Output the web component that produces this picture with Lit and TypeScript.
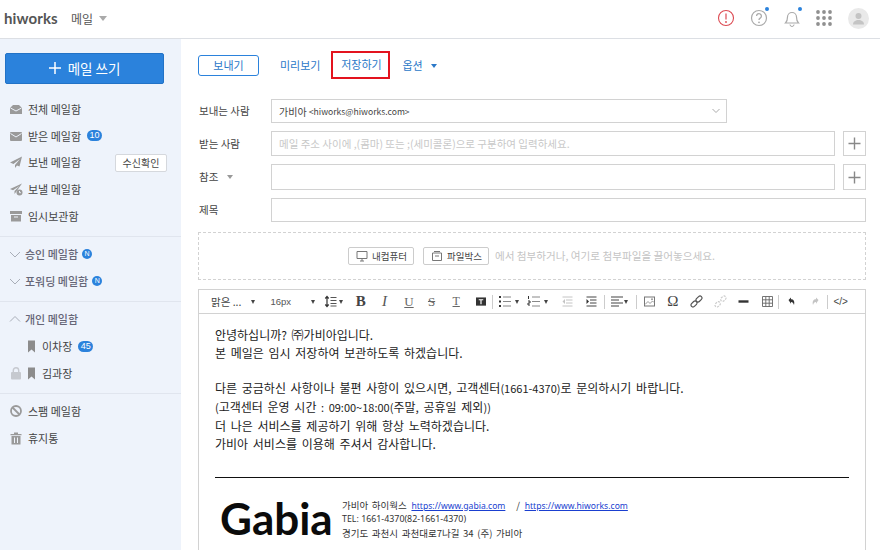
import { LitElement, html, css, svg } from "lit";
import { customElement } from "lit/decorators.js";

const ic = (body: unknown, w = 14, h = 14, vb = "0 0 14 14") =>
  html`<svg class="ic" width=${w} height=${h} viewBox=${vb}>${body}</svg>`;

const G = "#9a9a9a";
const icons = {
  all: ic(svg`<path d="M1 6l3-3h6l3 3v6H1z" fill="${G}"/><path d="M1.500 6L7 9l5.500-3" fill="none" stroke="#eef3fb" stroke-width="1"/>`),
  inbox: ic(svg`<rect x="1" y="3" width="12" height="9" rx="1" fill="${G}"/><path d="M1.500 4.500L7 8l5.500-3.500" fill="none" stroke="#eef3fb"/>`),
  sent: ic(svg`<path d="M13 1.500L1 7.500l3.500 1.500L11 4 6 10v3l2-2.500 2.500 1z" fill="${G}"/>`),
  sched: ic(svg`<path d="M13 1.500L1 7l3 1.300L10.500 4 5.500 9v3l1.500-2z" fill="${G}"/><circle cx="10.500" cy="10.500" r="3" fill="${G}"/><path d="M10.500 9v1.700h1.400" stroke="#eef3fb" fill="none"/>`),
  temp: ic(svg`<rect x="1" y="2" width="12" height="3" fill="${G}"/><path d="M2 6h10v6.500H2z" fill="${G}"/><path d="M5 8h4" stroke="#eef3fb"/>`),
  down: ic(svg`<path d="M2 5l5 5 5-5" fill="none" stroke="#a9aeb8"/>`),
  up: ic(svg`<path d="M2 9.500l5-5 5 5" fill="none" stroke="#a9aeb8"/>`),
  mark: ic(svg`<path d="M5 1.500h7v12l-3.500-3-3.500 3z" fill="#8c8c8c"/>`),
  lock: ic(svg`<rect x="2" y="6" width="10" height="7.500" rx="1" fill="#c6c9cf"/><path d="M4.300 6V4.500a2.700 2.700 0 0 1 5.400 0V6" fill="none" stroke="#c6c9cf" stroke-width="1.400"/>`),
  spam: ic(svg`<circle cx="7" cy="7" r="5" fill="none" stroke="${G}" stroke-width="1.800"/><path d="M3.500 3.500l7 7" stroke="${G}" stroke-width="1.800"/>`),
  trash: ic(svg`<path d="M5 1.500h4V3h3.500v1.300h-11V3H5zM2.500 5h9v8.500h-9z" fill="${G}"/><path d="M5.500 6.500v5.500M8.500 6.500v5.500" stroke="#eef3fb"/>`),
};

const tbIcons = {
  lineh: svg`<path d="M3 3v9M1.300 4.500L3 2.500l1.700 2M1.300 10.500L3 12.500l1.700-2" fill="none" stroke="#333" stroke-width="1.200"/><path d="M6.500 3.500h6M6.500 6.500h6M6.500 9.500h6M6.500 12h6" stroke="#555" stroke-width="1"/>`,
  ul: svg`<path d="M1 3h2M1 7.500h2M1 12h2" stroke="#333" stroke-width="2"/><path d="M5 3h8M5 7.500h8M5 12h8" stroke="#888"/>`,
  ol: svg`<path d="M1.500 2v3M1 7h2v2H1v2h2" fill="none" stroke="#333"/><path d="M5 3h8M5 7.500h8M5 12h8" stroke="#888"/>`,
  outdent: svg`<path d="M1.500 3h10M5 6h6.500M5 9h6.500M1.500 12h10" stroke="#c4c4c4"/><path d="M4 5v5L1.500 7.500z" fill="#c4c4c4"/>`,
  indent: svg`<path d="M1.500 3h10M5 6h6.500M5 9h6.500M1.500 12h10" stroke="#444"/><path d="M1.500 5v5l2.500-2.500z" fill="#333"/>`,
  align: svg`<path d="M1 3h12M1 6h8M1 9h12M1 12h8" stroke="#444" stroke-width="1.200"/>`,
  image: svg`<rect x="2.500" y="3" width="10" height="9" fill="none" stroke="#777"/><path d="M3 10.500l3-3 2 2 2.500-2.500 1.500 1.500" fill="none" stroke="#999"/><circle cx="10" cy="5.200" r="1" fill="#999"/>`,
  link: svg`<g fill="none" stroke="#555" stroke-width="1.200" transform="rotate(-45 7.500 7.500)"><rect x="0.500" y="5.500" width="7" height="4" rx="2"/><rect x="7.500" y="5.500" width="7" height="4" rx="2"/></g>`,
  unlink: svg`<g fill="none" stroke="#ccc" stroke-width="1.200" stroke-dasharray="2 1" transform="rotate(-45 7.500 7.500)"><rect x="0.500" y="5.500" width="6" height="4" rx="2"/><rect x="8.500" y="5.500" width="6" height="4" rx="2"/></g>`,
  hr: svg`<path d="M2.500 7.500h10" stroke="#333" stroke-width="2.400"/>`,
  table: svg`<path d="M2.500 2.500h10v10h-10zM5.800 2.500v10M9.200 2.500v10M2.500 5.800h10M2.500 9.200h10" fill="none" stroke="#666" stroke-width=".9"/>`,
  undo: svg`<path d="M4.500 6L7 3.500v1.700c2.500 0 4 2 3 5.800-.6-2-1.400-3-3-3v1.700z" fill="#333"/>`,
  redo: svg`<path d="M10.500 6L8 3.500v1.700c-2.500 0-4 2-3 5.800.6-2 1.400-3 3-3v1.700z" fill="#c4c4c4"/>`,
};
const tb = (k: keyof typeof tbIcons) => html`<svg class="tbi" width="15" height="15" viewBox="0 0 15 15">${tbIcons[k]}</svg>`;

@customElement("app-root")
export class AppRoot extends LitElement {
  static styles = css`
    :host { display: block; width: 880px; height: 550px; overflow: hidden; background: #fff; color: #333;
      font-family: "Noto Sans CJK KR", "Noto Sans", sans-serif; font-size: 11px; }
    * { box-sizing: border-box; }
    svg { display: block; flex: none; }
    .header { height: 39px; border-bottom: 1px solid #dcdfe4; display: flex; align-items: center; padding: 0 11px 2px 4px; }
    .logo { font-family: "Lato", sans-serif; font-weight: 700; font-size: 15px; color: #555; letter-spacing: 0.1px; width: 67px; }
    .app { font-size: 12px; color: #555; }
    .caret { width: 0; height: 0; border-left: 4.500px solid transparent; border-right: 4.500px solid transparent; border-top: 5px solid #aaa; margin-left: 6px; }
    .hicons { margin-left: auto; display: flex; align-items: center; gap: 15px; }
    .dotwrap { position: relative; }
    .dot { position: absolute; right: -1px; top: -2px; width: 4px; height: 4px; border-radius: 50%; background: #2b82dc; }
    .avatar { width: 21px; height: 21px; border-radius: 50%; background: #e9e9e9; display: flex; align-items: center; justify-content: center; margin-left: 1px; }
    .body { display: flex; height: 511px; }
    .side { width: 181px; background: #eef3fb; padding-top: 14px; flex: none; }
    .compose { margin: 0 17px 0 5px; height: 31px; background: #2b82dc; border: 1px solid #2272c6; border-radius: 2px; color: #fff; font-size: 13.500px; display: flex; align-items: center; justify-content: center; gap: 7px; padding-bottom: 1px; }
    .group { padding: 4px 0 7px; border-bottom: 1px solid #e0e5ee; }
    .group.first { padding-top: 12px; padding-bottom: 7px; }
    .group.last { border-bottom: 0; }
    .item { height: 26.600px; display: flex; align-items: center; padding-left: 9px; gap: 5px; color: #444; font-size: 11px; position: relative; }
    .item.head { color: #667; font-weight: 500; gap: 3px; padding-left: 8px; }
    .spacer { width: 9px; flex: none; }
    .badge { background: #2b82dc; color: #fff; font-size: 9px; font-weight: 500; border-radius: 8px; height: 11px; min-width: 15px; line-height: 11px; text-align: center; padding: 0 2px; margin-left: 1px; font-family: "Liberation Sans", sans-serif; }
    .n { width: 10px; height: 10px; min-width: 0; padding: 0; border-radius: 50%; font-size: 7px; line-height: 10px; margin-left: 1px; }
    .check { position: absolute; left: 115px; top: 5px; width: 52px; height: 18px; border: 1px solid #d5d8dd; background: #fff; border-radius: 2px; font-size: 10px; text-align: center; line-height: 15px; color: #444; }
    .lockic { position: absolute; left: 9px; top: 7px; }
    .main { flex: 1; padding: 11px 14px 0 17px; min-width: 0; }
    .actions { display: flex; align-items: center; height: 30px; font-size: 11px; color: #2b78c8; }
    .send { width: 61px; height: 21px; border: 1px solid #2b82dc; border-radius: 3px; text-align: center; line-height: 18px; color: #2b78c8; margin-right: 21px; }
    .save { width: 59px; height: 28px; border: 2px solid #e3131e; margin: 0 12px 0 11px; text-align: center; line-height: 22px; padding-left: 1px; }
    .opt { display: flex; align-items: center; gap: 8px; color: #2b78c8; margin-left: 0; }
    .opt i { width: 0; height: 0; border-left: 3px solid transparent; border-right: 3px solid transparent; border-top: 4px solid #2b78c8; margin-top: 2px; }
    .form { margin-top: 19px; display: grid; grid-template-columns: 73px 1fr; row-gap: 8px; align-items: center; }
    .lbl { font-size: 10.500px; color: #444; display: flex; align-items: center; gap: 9px; padding-left: 1px; padding-bottom: 1px; }
    .lbl i { width: 0; height: 0; border-left: 3px solid transparent; border-right: 3px solid transparent; border-top: 4px solid #999; }
    .field { display: flex; gap: 8px; }
    .input { flex: 1; border: 1px solid #d2d2d2; display: flex; align-items: center; padding-left: 7px; font-size: 10px; color: #444; height: 25px; white-space: pre; }
    .lat { font-size: 8.600px; }
    .input.sel { height: 24px; margin-right: 139px; position: relative; }
    .input.ph { color: #c8c8c8; font-size: 10.500px; }
    .input.tall { height: 26px; }
    .input.subj { height: 24px; }
    .chev { position: absolute; right: 6px; top: 8px; }
    .plus { width: 23px; border: 1px solid #d2d2d2; display: flex; align-items: center; justify-content: center; }
    .attach { margin-top: 10px; height: 48px; border: 1px dashed #d2d2d2; display: flex; align-items: center; padding-left: 149px; color: #c4c4c4; font-size: 10.600px; padding-bottom: 1px; white-space: pre; }
    .abtn { height: 18px; border: 1px solid #ccc; border-radius: 2px; display: flex; align-items: center; gap: 4px; padding: 0 6px 0 7px; font-size: 9.500px; color: #444; margin-right: 9px; }
    .abtn.fb { margin-right: 6px; }
    .editor { margin-top: 9px; border: 1px solid #d2d2d2; border-bottom: 0; height: 300px; }
    .tools { height: 24px; border-bottom: 1px solid #d2d2d2; display: flex; align-items: center; padding-left: 12px; color: #444; font-size: 10px; background: #fff; }
    .tools > * { flex: none; }
    .t { width: 23.600px; display: flex; align-items: center; justify-content: center; font-family: "Liberation Serif", serif; font-size: 13px; color: #666; }
    .t.b { font-weight: 700; font-size: 15px; color: #444; margin-left: 6px; }
    .t.i { font-style: italic; font-size: 15px; color: #555; }
    .t.u { text-decoration: underline; padding-left: 2px; }
    .t.s { text-decoration: line-through; }
    .t.sm { font-size: 12px; }
    .t.om { width: 15px; font-size: 15px; color: #444; }
    .t.box { padding-left: 4px; }
    .sp { width: 1px; height: 14px; background: #ccc; margin: 0 4px; }
    .sp.first { margin: 0 4.300px 0 1.700px; }
    .sp.a { margin: 0 4.700px 0 4.300px; }
    .sp.b { margin: 0 4.700px 0 7.600px; }
    .sp.c { margin: 0 5.300px 0 3.400px; }
    .sp.d { margin: 0 5px 0 4px; }
    .g8 { width: 8px; } .g83 { width: 8.300px; } .g85 { width: 8.500px; } .g87 { width: 8.700px; } .g9 { width: 9px; } .g135 { width: 13.500px; }
    .dd { width: 0; height: 0; border-left: 2.500px solid transparent; border-right: 2.500px solid transparent; border-top: 4px solid #444; margin-left: 2px; }
    .dd.tight { margin-left: -0.300px; }
    .dd.lh { margin-left: 0; }
    .fnt { width: 50px; display: flex; align-items: center; gap: 7.500px; font-size: 10.500px; }
    .fsz { width: 47.500px; margin-left: 9.500px; margin-right: 6px; display: flex; align-items: center; gap: 17.500px; color: #555; font-size: 9.500px; font-family: "Liberation Sans", sans-serif; }
    .src { font-family: "Liberation Sans", sans-serif; font-size: 10px; }
    .content { padding: 12px 16px 0; font-size: 12px; word-spacing: 2px; line-height: 17.830px; color: #222; }
    .num { font-size: 11px; }
    .content hr { border: 0; border-top: 1px solid #111; margin: 24px 0 0; }
    .sig { display: flex; margin: 12px 0 0 5px; align-items: center; word-spacing: 0; }
    .gabia { font-family: "Lato", "Noto Sans", sans-serif; font-weight: 700; font-size: 44px; color: #0b0b0b; line-height: 56px; width: 122px; }
    .sigt { font-size: 9.500px; line-height: 13.500px; color: #333; word-spacing: 1.500px; margin-top: 3.500px; }
    .sigt a { color: #1a3fd0; text-decoration: underline; font-family: "Noto Sans", sans-serif; font-size: 8.600px; word-spacing: 0; margin-left: 1px; }
    .sigl { font-family: "Noto Sans", "Noto Sans CJK KR", sans-serif; font-size: 8.850px; word-spacing: 0; }
  `;

  render() {
    return html`
      <div class="header">
        <div class="logo">hiworks</div>
        <div class="app">메일</div><div class="caret"></div>
        <div class="hicons">
          <svg width="18" height="18" viewBox="0 0 18 18"><circle cx="9" cy="9" r="7.500" fill="none" stroke="#dc4a52" stroke-width="1.100"/><path d="M9 4.500v6" stroke="#dc4a52" stroke-width="1.200"/><circle cx="9" cy="13" r=".9" fill="#dc4a52"/></svg>
          <div class="dotwrap"><svg width="18" height="18" viewBox="0 0 18 18"><circle cx="9" cy="9" r="7.500" fill="none" stroke="#aaa" stroke-width="1.200"/><path d="M6.600 7a2.400 2.400 0 1 1 3.600 2.100c-.8.500-1.200 1-1.200 1.900" fill="none" stroke="#aaa" stroke-width="1.300"/><circle cx="9" cy="13.300" r=".9" fill="#aaa"/></svg><span class="dot"></span></div>
          <div class="dotwrap"><svg width="18" height="18" viewBox="0 0 18 18"><path d="M2.500 14c1.500-1.500 2-2.500 2-6a4.500 4.500 0 0 1 9 0c0 3.500.5 4.500 2 6z" fill="none" stroke="#aaa" stroke-width="1.200"/><path d="M7 15.500a2 2 0 0 0 4 0" fill="none" stroke="#aaa"/></svg><span class="dot"></span></div>
          <svg width="16" height="16" viewBox="0 0 16 16" fill="#909090">${[2, 8, 14].map(y => [2, 8, 14].map(x => svg`<circle cx=${x} cy=${y} r="1.900"/>`))}</svg>
          <div class="avatar"><svg width="13" height="13" viewBox="0 0 13 13" fill="#c4c4c4"><circle cx="6.500" cy="4" r="3"/><path d="M1 12.500c0-3 2.500-4.500 5.500-4.500s5.500 1.500 5.500 4.500z"/></svg></div>
        </div>
      </div>
      <div class="body">
        <nav class="side">
          <div class="compose"><svg width="12" height="12" viewBox="0 0 12 12"><path d="M6 0v12M0 6h12" stroke="#fff" stroke-width="1.500"/></svg>메일 쓰기</div>
          <div class="group first">
            <div class="item">${icons.all}전체 메일함</div>
            <div class="item">${icons.inbox}받은 메일함<span class="badge">10</span></div>
            <div class="item">${icons.sent}보낸 메일함<span class="check">수신확인</span></div>
            <div class="item">${icons.sched}보낼 메일함</div>
            <div class="item">${icons.temp}임시보관함</div>
          </div>
          <div class="group">
            <div class="item head">${icons.down}승인 메일함<span class="badge n">N</span></div>
            <div class="item head">${icons.down}포워딩 메일함<span class="badge n">N</span></div>
          </div>
          <div class="group">
            <div class="item head">${icons.up}개인 메일함</div>
            <div class="item"><span class="spacer"></span>${icons.mark}이차장<span class="badge">45</span></div>
            <div class="item"><span class="lockic">${icons.lock}</span><span class="spacer"></span>${icons.mark}김과장</div>
          </div>
          <div class="group last">
            <div class="item">${icons.spam}스팸 메일함</div>
            <div class="item">${icons.trash}휴지통</div>
          </div>
        </nav>
        <main class="main">
          <div class="actions">
            <div class="send">보내기</div>
            <div>미리보기</div>
            <div class="save">저장하기</div>
            <div class="opt">옵션<i></i></div>
          </div>
          <div class="form">
            <div class="lbl">보내는 사람</div>
            <div class="field"><div class="input sel"><span>가비아 </span><span class="lat">&lt;hiworks@hiworks.com&gt;</span><svg class="chev" width="8" height="6" viewBox="0 0 8 6"><path d="M.500 1l3.500 3.500L7.500 1" fill="none" stroke="#aaa"/></svg></div></div>
            <div class="lbl">받는 사람</div>
            <div class="field"><div class="input ph">메일 주소 사이에 ,(콤마) 또는 ;(세미콜론)으로 구분하여 입력하세요.</div><div class="plus"><svg width="13" height="13" viewBox="0 0 13 13"><path d="M6.500 .5v12M.5 6.500h12" stroke="#888" stroke-width="1.400"/></svg></div></div>
            <div class="lbl">참조<i></i></div>
            <div class="field"><div class="input tall"></div><div class="plus"><svg width="13" height="13" viewBox="0 0 13 13"><path d="M6.500 .5v12M.5 6.500h12" stroke="#888" stroke-width="1.400"/></svg></div></div>
            <div class="lbl">제목</div>
            <div class="field"><div class="input subj"></div></div>
          </div>
          <div class="attach">
            <div class="abtn"><svg width="12" height="12" viewBox="0 0 12 12"><path d="M1 1.500h10v7H1zM4 11h4M6 8.500V11" fill="none" stroke="#777"/></svg>내컴퓨터</div>
            <div class="abtn fb"><svg width="12" height="12" viewBox="0 0 12 12"><path d="M1.500 3h9v7.500h-9zM3 1.500h6M4 6h4" fill="none" stroke="#777"/></svg>파일박스</div>
            <span>에서 첨부하거나, 여기로 첨부파일을 끌어놓으세요.</span>
          </div>
          <div class="editor">
            <div class="tools">
              <div class="fnt">맑은 ...<span class="dd"></span></div>
              <div class="fsz">16px<span class="dd"></span></div>
              ${tb("lineh")}<span class="dd lh"></span>
              <div class="t b">B</div>
              <div class="t i">I</div>
              <div class="t u">U</div>
              <div class="t s">S</div>
              <div class="t sm u">T</div>
              <div class="t box"><svg width="10" height="10" viewBox="0 0 11 11"><rect x="0" y="0.500" width="11" height="9" fill="#333"/><path d="M3 3h5M5.500 3v5" stroke="#fff" stroke-width="1.300"/></svg></div>
              <span class="sp first"></span>
              ${tb("ul")}<span class="dd"></span><span class="g8"></span>
              ${tb("ol")}<span class="dd"></span><span class="g135"></span>
              ${tb("outdent")}<span class="g85"></span>
              ${tb("indent")}
              <span class="sp a"></span>
              ${tb("align")}<span class="dd tight"></span>
              <span class="sp b"></span>
              ${tb("image")}<span class="g87"></span>
              <div class="t om">Ω</div><span class="g83"></span>
              ${tb("link")}<span class="g9"></span>
              ${tb("unlink")}<span class="g83"></span>
              ${tb("hr")}<span class="g9"></span>
              ${tb("table")}
              <span class="sp c"></span>
              ${tb("undo")}<span class="g9"></span>
              ${tb("redo")}
              <span class="sp d"></span>
              <span class="src">&lt;/&gt;</span>
            </div>
            <div class="content">
              <div>안녕하십니까? ㈜가비아입니다.</div>
              <div>본 메일은 임시 저장하여 보관하도록 하겠습니다.</div>
              <div>&nbsp;</div>
              <div>다른 궁금하신 사항이나 불편 사항이 있으시면, 고객센터<span class="num">(1661-4370)</span>로 문의하시기 바랍니다.</div>
              <div><span class="num">(</span>고객센터 운영 시간 <span class="num">: 09:00~18:00(</span>주말, 공휴일 제외<span class="num">))</span></div>
              <div>더 나은 서비스를 제공하기 위해 항상 노력하겠습니다.</div>
              <div>가비아 서비스를 이용해 주셔서 감사합니다.</div>
              <hr />
              <div class="sig">
                <div class="gabia">Gabia</div>
                <div class="sigt">
                  <div>가비아 하이웍스 <a>https://www.gabia.com</a> &nbsp; / <a>https://www.hiworks.com</a></div>
                  <div class="sigl">TEL: 1661-4370(82-1661-4370)</div>
                  <div>경기도 과천시 과천대로7나길 34 (주) 가비아</div>
                </div>
              </div>
            </div>
          </div>
        </main>
      </div>
    `;
  }
}
